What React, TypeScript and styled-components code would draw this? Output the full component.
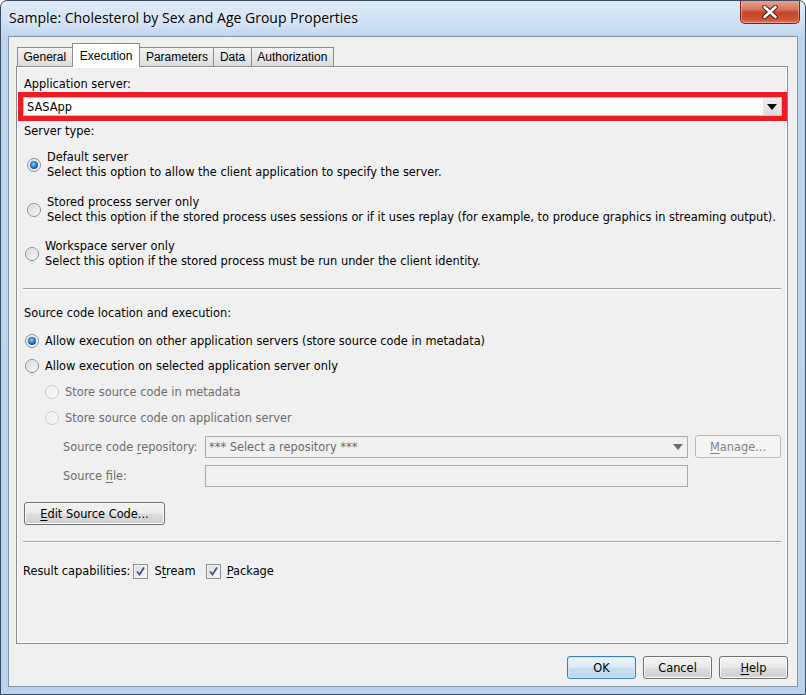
import React from "react";
import styled, { createGlobalStyle, css } from "styled-components";

const GlobalStyle = createGlobalStyle`
  html, body {
    margin: 0;
    padding: 0;
  }
  body {
    width: 806px;
    height: 695px;
    overflow: hidden;
    font-family: "DejaVu Sans", Verdana, sans-serif;
    font-size: 11.4px;
    color: #000;
  }
`;

const Window = styled.div`
  box-sizing: border-box;
  width: 806px;
  height: 695px;
  display: flex;
  flex-direction: column;
  border: 1px solid #3b4b5d;
  border-radius: 7px 7px 0 0;
  background: linear-gradient(180deg, #dfeaf7 0px, #c9dcf1 28px, #bcd5ef 36px, #b9d4f0 100%);
  overflow: hidden;
`;

const TitleBar = styled.div`
  flex: none;
  height: 35px;
  display: flex;
  justify-content: space-between;
  align-items: flex-start;
  padding: 0 5px 0 8px;
`;

const Title = styled.div`
  font-family: "Open Sans", "Liberation Sans", sans-serif;
  font-size: 14px;
  line-height: 34px;
  color: #000;
  text-shadow: 0 0 8px rgba(255, 255, 255, 0.95), 0 0 14px rgba(255, 255, 255, 0.7);
`;

const CloseButton = styled.div`
  box-sizing: border-box;
  width: 60px;
  height: 24px;
  margin-top: -1px;
  display: flex;
  align-items: center;
  justify-content: center;
  border: 1px solid #6e2a1e;
  border-top: none;
  border-radius: 0 0 5px 5px;
  background: linear-gradient(180deg, #e9a897 0%, #d8765f 40%, #c4442a 55%, #d1533a 85%, #e07d5e 100%);
  box-shadow: inset 0 0 0 1px rgba(255, 210, 200, 0.45);
`;

const Client = styled.div`
  flex: 1;
  display: flex;
  flex-direction: column;
  margin: 0 7px 7px 7px;
  padding: 6px 9px 7px 7px;
  background: #f0f0f0;
  border: 1px solid #8494a6;
`;

const TabStrip = styled.div`
  display: flex;
  align-items: flex-end;
  height: 23px;
  padding-left: 1px;
  position: relative;
  z-index: 1;
`;

const Tab = styled.div<{ $active?: boolean }>`
  box-sizing: border-box;
  font-family: "Liberation Sans", Arial, sans-serif;
  font-size: 12px;
  display: flex;
  align-items: center;
  border: 1px solid #898c95;
  border-bottom: none;
  margin-right: -1px;
  ${(p) =>
    p.$active
      ? css`
          height: 24px;
          margin-bottom: -1px;
          padding: 0 7px;
          background: #fff;
          position: relative;
          z-index: 2;
        `
      : css`
          height: 19px;
          padding: 0 5.5px;
          background: linear-gradient(180deg, #f3f3f3 0%, #e8e8e8 50%, #dcdcdc 100%);
        `}
`;

const Panel = styled.div`
  flex: 1;
  display: flex;
  flex-direction: column;
  padding: 10px 6px 0 7px;
  border: 1px solid #898c95;
  box-shadow: inset 0 0 0 1px #fff;
  background: #f0f0f0;
`;

const Label = styled.div<{ $gap?: number; $muted?: boolean }>`
  line-height: 15px;
  margin-top: ${(p) => p.$gap ?? 0}px;
  color: ${(p) => (p.$muted ? "#6d6d6d" : "#000")};
  white-space: nowrap;
`;

const Highlight = styled.div`
  margin: 0 -6px 0 -6px;
  border: 5px solid #ed1c24;
`;

const Combo = styled.div<{ $disabled?: boolean; $height: number }>`
  box-sizing: border-box;
  height: ${(p) => p.$height}px;
  display: flex;
  align-items: stretch;
  border: 1px solid ${(p) => (p.$disabled ? "#acacac" : "#c4c4c4")};
  background: ${(p) => (p.$disabled ? "#f0f0f0" : "#fff")};
  color: ${(p) => (p.$disabled ? "#6d6d6d" : "#000")};
  flex: 1;
`;

const ComboText = styled.div`
  flex: 1;
  display: flex;
  align-items: center;
  padding-left: 3px;
  white-space: nowrap;
`;

const ComboArrow = styled.div<{ $disabled?: boolean }>`
  width: 18px;
  display: flex;
  align-items: center;
  justify-content: center;
  background: ${(p) => (p.$disabled ? "#f0f0f0" : "linear-gradient(180deg, #ececec, #dedede)")};
  &::before {
    content: "";
    border-left: 5px solid transparent;
    border-right: 5px solid transparent;
    border-top: 6px solid ${(p) => (p.$disabled ? "#6d6d6d" : "#000")};
  }
`;

const OptionBlock = styled.div<{ $gap: number; $indent: number }>`
  display: flex;
  align-items: center;
  gap: 6px;
  margin-top: ${(p) => p.$gap}px;
  margin-left: ${(p) => p.$indent}px;
`;

const OptionText = styled.div`
  line-height: 15px;
  white-space: nowrap;
`;

const Radio = styled.span<{ $checked?: boolean; $disabled?: boolean }>`
  box-sizing: border-box;
  flex: none;
  width: 14px;
  height: 14px;
  border-radius: 50%;
  position: relative;
  border: 1px solid ${(p) => (p.$disabled ? "#c9c9c9" : "#8b8c8c")};
  background: ${(p) =>
    p.$disabled
      ? "linear-gradient(135deg, #ececec, #fafafa)"
      : "linear-gradient(135deg, #cfcfcf 0%, #e6e6e6 45%, #fbfbfb 100%)"};
  box-shadow: inset 0 0 0 1px ${(p) => (p.$disabled ? "#f6f6f6" : "#f3f3f3")};
  ${(p) =>
    p.$checked &&
    css`
      &::after {
        content: "";
        position: absolute;
        left: 2px;
        top: 2px;
        width: 8px;
        height: 8px;
        border-radius: 50%;
        background: radial-gradient(circle at 45% 40%, #9bd6ff 0%, #2f86d8 38%, #0f3f86 80%, #0b2d61 100%);
      }
    `}
`;

const RadioRow = styled.div<{ $gap: number; $indent: number; $muted?: boolean }>`
  display: flex;
  align-items: center;
  gap: 6px;
  height: 20px;
  margin-top: ${(p) => p.$gap}px;
  margin-left: ${(p) => p.$indent}px;
  color: ${(p) => (p.$muted ? "#6d6d6d" : "#000")};
  white-space: nowrap;
`;

const Separator = styled.div<{ $gap: number }>`
  margin: ${(p) => p.$gap}px 0 0 -1px;
  border-top: 1px solid #a0a0a0;
  border-bottom: 1px solid #fff;
`;

const FieldRow = styled.div<{ $gap: number }>`
  display: flex;
  align-items: center;
  margin-top: ${(p) => p.$gap}px;
  padding-left: 39px;
`;

const FieldLabel = styled.div`
  width: 142px;
  flex: none;
  color: #6d6d6d;
  white-space: nowrap;
`;

const FieldWrap = styled.div`
  width: 483px;
  flex: none;
  display: flex;
`;

const Button = styled.div<{ $width: number; $variant?: "default" | "disabled" }>`
  box-sizing: border-box;
  width: ${(p) => p.$width}px;
  height: 23px;
  flex: none;
  display: flex;
  align-items: center;
  justify-content: center;
  border-radius: 3px;
  white-space: nowrap;
  ${(p) =>
    p.$variant === "disabled"
      ? css`
          border: 1px solid #b5b8ba;
          background: #f4f4f4;
          color: #838383;
        `
      : p.$variant === "default"
      ? css`
          border: 1px solid #3c7fb1;
          background: linear-gradient(180deg, #eaf3f9 0%, #dcebf5 48%, #c9dfee 52%, #bcd6ea 100%);
          box-shadow: inset 0 0 0 1px #cdeaf9;
        `
      : css`
          border: 1px solid #707070;
          background: linear-gradient(180deg, #f2f2f2 0%, #ebebeb 48%, #dddddd 52%, #cfcfcf 100%);
          box-shadow: inset 0 0 0 1px #fbfbfb;
        `}
`;

const ButtonLine = styled.div<{ $gap: number }>`
  margin-top: ${(p) => p.$gap}px;
`;

const CapRow = styled.div`
  display: flex;
  align-items: center;
  margin: 20px 0 0 -1px;
  height: 16px;
  white-space: nowrap;
`;

const CheckBox = styled.span`
  box-sizing: border-box;
  width: 15px;
  height: 15px;
  flex: none;
  display: flex;
  align-items: center;
  justify-content: center;
  border: 1px solid #8e8f8f;
  background: linear-gradient(135deg, #dcdcdc, #f8f8f8);
  box-shadow: inset 0 0 0 1px #f4f4f4;
  margin: 0 6px 0 3px;
`;

const CapGroup = styled.span<{ $gap?: number }>`
  display: flex;
  align-items: center;
  margin-left: ${(p) => p.$gap ?? 0}px;
`;

const DialogButtons = styled.div`
  display: flex;
  justify-content: flex-end;
  gap: 7px;
  margin-top: 12px;
`;

const U = styled.span`
  text-decoration: underline;
  text-underline-offset: 2px;
`;

const Check = () => (
  <svg width="11" height="11" viewBox="0 0 11 11">
    <path d="M2 5.5 L4.5 8.5 L9 1.5" fill="none" stroke="#3f5483" strokeWidth="1.8" />
  </svg>
);

const CloseX = () => (
  <svg width="16" height="14" viewBox="0 0 16 14">
    <path d="M2.5 2 L13.5 12 M13.5 2 L2.5 12" stroke="#4a1a12" strokeWidth="4.4" strokeLinecap="round" />
    <path d="M2.5 2 L13.5 12 M13.5 2 L2.5 12" stroke="#fff" strokeWidth="2.6" strokeLinecap="round" />
  </svg>
);

const tabs = ["General", "Execution", "Parameters", "Data", "Authorization"];

const App = () => {
  return (
    <>
      <GlobalStyle />
      <Window>
        <TitleBar>
          <Title>Sample: Cholesterol by Sex and Age Group Properties</Title>
          <CloseButton>
            <CloseX />
          </CloseButton>
        </TitleBar>
        <Client>
          <TabStrip>
            {tabs.map((t) => (
              <Tab key={t} $active={t === "Execution"}>
                {t}
              </Tab>
            ))}
          </TabStrip>
          <Panel>
            <Label>Application server:</Label>
            <Highlight>
              <Combo $height={19}>
                <ComboText>SASApp</ComboText>
                <ComboArrow />
              </Combo>
            </Highlight>
            <Label $gap={3}>Server type:</Label>

            <OptionBlock $gap={11} $indent={3}>
              <Radio $checked />
              <OptionText>
                Default server
                <br />
                Select this option to allow the client application to specify the server.
              </OptionText>
            </OptionBlock>
            <OptionBlock $gap={15} $indent={3}>
              <Radio />
              <OptionText>
                Stored process server only
                <br />
                Select this option if the stored process uses sessions or if it uses replay (for example, to
                produce graphics in streaming output).
              </OptionText>
            </OptionBlock>
            <OptionBlock $gap={14} $indent={1}>
              <Radio />
              <OptionText>
                Workspace server only
                <br />
                Select this option if the stored process must be run under the client identity.
              </OptionText>
            </OptionBlock>

            <Separator $gap={19} />
            <Label $gap={16}>Source code location and execution:</Label>
            <RadioRow $gap={10} $indent={1}>
              <Radio $checked />
              Allow execution on other application servers (store source code in metadata)
            </RadioRow>
            <RadioRow $gap={5} $indent={1}>
              <Radio />
              Allow execution on selected application server only
            </RadioRow>
            <RadioRow $gap={6} $indent={21} $muted>
              <Radio $disabled />
              Store source code in metadata
            </RadioRow>
            <RadioRow $gap={6} $indent={21} $muted>
              <Radio $disabled />
              Store source code on application server
            </RadioRow>

            <FieldRow $gap={7}>
              <FieldLabel>
                Source code <U>r</U>epository:
              </FieldLabel>
              <FieldWrap>
                <Combo $disabled $height={22}>
                  <ComboText>*** Select a repository ***</ComboText>
                  <ComboArrow $disabled />
                </Combo>
              </FieldWrap>
              <Button $width={86} $variant="disabled" style={{ marginLeft: 7 }}>
                <U>M</U>anage...
              </Button>
            </FieldRow>
            <FieldRow $gap={7}>
              <FieldLabel>
                Source <U>f</U>ile:
              </FieldLabel>
              <FieldWrap>
                <Combo $disabled $height={22} />
              </FieldWrap>
            </FieldRow>

            <ButtonLine $gap={15}>
              <Button $width={141}>
                <span>
                  <U>E</U>dit Source Code...
                </span>
              </Button>
            </ButtonLine>

            <Separator $gap={16} />

            <CapRow>
              Result capabilities:
              <CheckBox>
                <Check />
              </CheckBox>
              <span>
                S<U>t</U>ream
              </span>
              <CapGroup $gap={7}>
                <CheckBox>
                  <Check />
                </CheckBox>
                <span>
                  <U>P</U>ackage
                </span>
              </CapGroup>
            </CapRow>
          </Panel>
          <DialogButtons>
            <Button $width={69} $variant="default">
              OK
            </Button>
            <Button $width={69}>Cancel</Button>
            <Button $width={69}>
              <span>
                <U>H</U>elp
              </span>
            </Button>
          </DialogButtons>
        </Client>
      </Window>
    </>
  );
};

export default App;
